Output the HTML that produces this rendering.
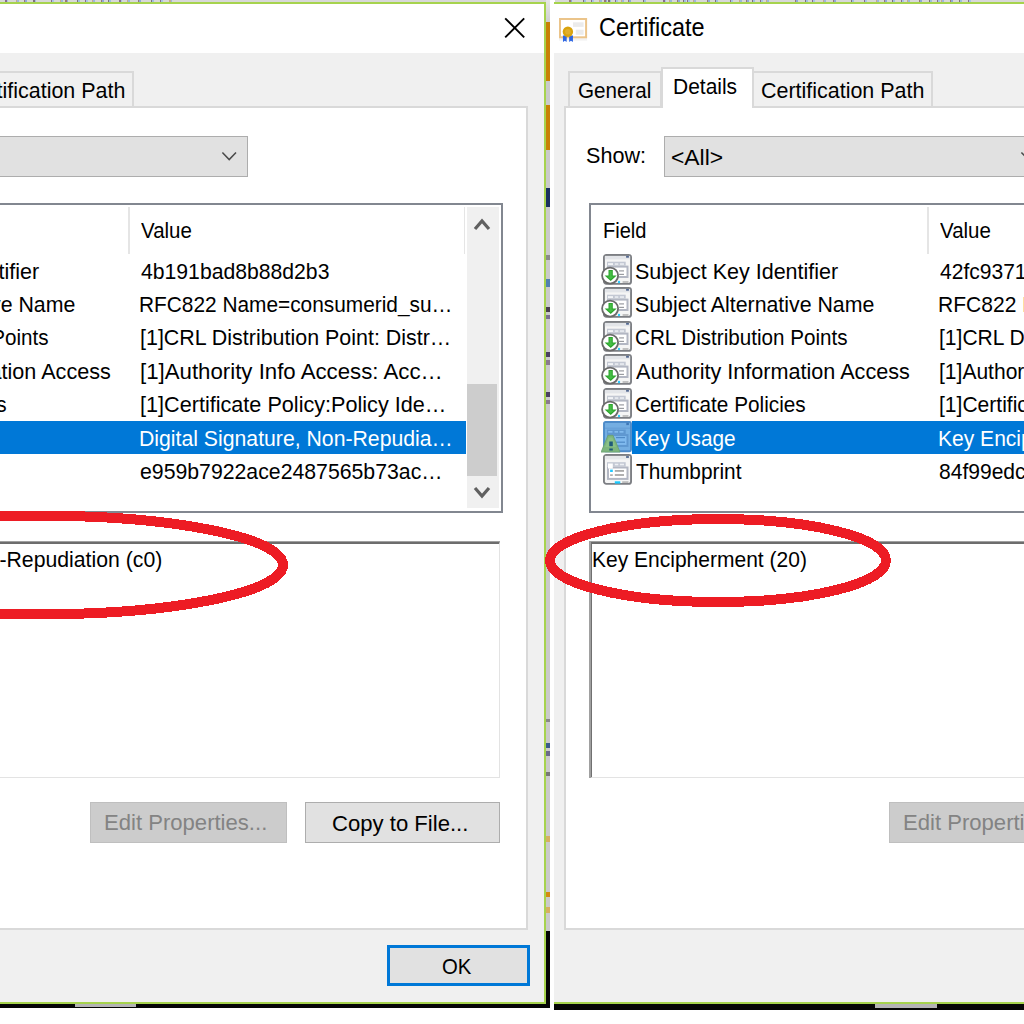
<!DOCTYPE html>
<html><head><meta charset="utf-8"><style>
html,body{margin:0;padding:0;}
body{width:1024px;height:1024px;overflow:hidden;position:relative;background:#fff;font-family:"Liberation Sans", sans-serif;}
</style></head><body>
<div style="position:absolute;left:0px;top:0px;width:546px;height:2.3px;background:#d8d8d8"></div><div style="position:absolute;left:555px;top:0px;width:469px;height:2.3px;background:#d8d8d8"></div><div style="position:absolute;left:546px;top:0px;width:4px;height:22px;background:linear-gradient(#e6e6e6,#cfcfcf)"></div><div style="position:absolute;left:546px;top:22px;width:4px;height:909px;background:#cacaca"></div><div style="position:absolute;left:546px;top:22px;width:4px;height:59px;background:#c98004"></div><div style="position:absolute;left:546px;top:105px;width:4px;height:45px;background:#c98004"></div><div style="position:absolute;left:546px;top:188px;width:4px;height:19px;background:#1a3060"></div><div style="position:absolute;left:546px;top:255px;width:4px;height:5px;background:#8a8a8a"></div><div style="position:absolute;left:546px;top:279px;width:4px;height:8px;background:#5080b0"></div><div style="position:absolute;left:546px;top:307px;width:4px;height:5px;background:#4a4050"></div><div style="position:absolute;left:546px;top:315px;width:4px;height:4px;background:#7a7090"></div><div style="position:absolute;left:546px;top:352px;width:4px;height:5px;background:#4a4060"></div><div style="position:absolute;left:546px;top:360px;width:4px;height:5px;background:#8a7a90"></div><div style="position:absolute;left:546px;top:392px;width:4px;height:5px;background:#4a4060"></div><div style="position:absolute;left:546px;top:400px;width:4px;height:4px;background:#8a7a90"></div><div style="position:absolute;left:546px;top:719px;width:4px;height:3px;background:#888"></div><div style="position:absolute;left:546px;top:743px;width:4px;height:5px;background:#3a5a8a"></div><div style="position:absolute;left:546px;top:751px;width:4px;height:5px;background:#6a6a8a"></div><div style="position:absolute;left:546px;top:772px;width:4px;height:4px;background:#777"></div><div style="position:absolute;left:546px;top:836px;width:4px;height:6px;background:#d6b060"></div><div style="position:absolute;left:546px;top:892px;width:4px;height:5px;background:#d48a10"></div><div style="position:absolute;left:546px;top:907px;width:4px;height:6px;background:#d6b060"></div><div style="position:absolute;left:-245px;top:2px;width:789px;height:2px;background:#a6d34d"></div><div style="position:absolute;left:544px;top:2px;width:2px;height:1002px;background:#a6d34d"></div><div style="position:absolute;left:-245px;top:1002px;width:791px;height:2px;background:#a6d34d"></div><div style="position:absolute;left:-245px;top:4px;width:789px;height:49px;background:#fff"></div><div style="position:absolute;left:-245px;top:53px;width:789px;height:949px;background:#f0f0f0"></div><div style="position:absolute;left:-245px;top:1004px;width:795px;height:3.6px;background:#050505"></div><div style="position:absolute;left:546px;top:931px;width:4px;height:73px;background:#050505"></div><svg width="22" height="22" style="position:absolute;left:504px;top:17px"><path d="M1.2 1.4 L20.2 20.4 M20.2 1.4 L1.2 20.4" stroke="#000" stroke-width="1.9"/></svg><div style="position:absolute;left:-231px;top:71.3px;width:94px;height:37px;background:#f0f0f0;border:2px solid #d9d9d9;border-bottom:none;box-sizing:border-box"></div><div style="position:absolute;left:-46.599999999999994px;top:71.3px;width:180.6px;height:37px;background:#f0f0f0;border:2px solid #d9d9d9;border-bottom:none;box-sizing:border-box"></div><div style="position:absolute;left:-235px;top:106px;width:763px;height:823.5px;background:#fff;border:2px solid #d9d9d9;box-sizing:border-box"></div><div style="position:absolute;left:-138.4px;top:67.4px;width:93.4px;height:41px;background:#fff;border:2px solid #d9d9d9;border-bottom:none;box-sizing:border-box"></div><div style="position:absolute;left:-221.42px;top:77.64px;font-size:22.5px;line-height:25.85px;color:#000;white-space:pre;transform:scaleX(0.9167);transform-origin:0 0;">General</div><div style="position:absolute;left:-125.66px;top:74.44px;font-size:22.5px;line-height:25.85px;color:#000;white-space:pre;transform:scaleX(0.9318);transform-origin:0 0;">Details</div><div style="position:absolute;left:-38.25px;top:77.64px;font-size:22.5px;line-height:25.85px;color:#000;white-space:pre;transform:scaleX(0.9538);transform-origin:0 0;">Certification Path</div><div style="position:absolute;left:-213.36px;top:143.04px;font-size:22.5px;line-height:25.85px;color:#000;white-space:pre;transform:scaleX(0.9600);transform-origin:0 0;">Show:</div><div style="position:absolute;left:-135px;top:136px;width:382.5px;height:40.6px;background:#e1e1e1;border:1.6px solid #adadad;box-sizing:border-box"></div><div style="position:absolute;left:-127.52px;top:144.94px;font-size:22.5px;line-height:25.85px;color:#000;white-space:pre;transform:scaleX(1.0160);transform-origin:0 0;">&lt;All&gt;</div><svg width="18" height="12" style="position:absolute;left:221px;top:150.5px"><path d="M1.4 1.4 L8.2 8.6 L15 1.4" fill="none" stroke="#4a4a4a" stroke-width="1.5"/></svg><div style="position:absolute;left:-210px;top:202.5px;width:712.5px;height:310px;background:#fff;border:2px solid #828790;box-sizing:border-box"></div><div style="position:absolute;left:128px;top:207px;width:1.6px;height:47px;background:#e5e5e5"></div><div style="position:absolute;left:463.5px;top:207px;width:1.6px;height:47px;background:#e5e5e5"></div><div style="position:absolute;left:-195.78px;top:218.04px;font-size:22.5px;line-height:25.85px;color:#000;white-space:pre;transform:scaleX(0.8913);transform-origin:0 0;">Field</div><div style="position:absolute;left:141.20px;top:218.04px;font-size:22.5px;line-height:25.85px;color:#000;white-space:pre;transform:scaleX(0.9109);transform-origin:0 0;">Value</div><svg width="34" height="34" viewBox="-2 -1 34 34" style="position:absolute;left:-198px;top:253.0px">
<rect x="0.95" y="0.95" width="27.1" height="28.9" rx="2.4" fill="#f5f5f5" stroke="#7d7f84" stroke-width="1.9"/>
<rect x="1.9" y="1.9" width="25.2" height="3.5" fill="#e3e5e9"/>
<rect x="23.1" y="1.9" width="2.8" height="1.8" fill="#51678f"/>
<rect x="4" y="7.7" width="18.7" height="3.9" fill="#c3c8d3"/>
<rect x="5" y="9.3" width="5" height="1.5" fill="#fff"/>
<rect x="11.8" y="9.3" width="3.5" height="1.5" fill="#eef0f4"/>
<rect x="16.9" y="9.3" width="4.1" height="1.5" fill="#eef0f4"/>
<rect x="5" y="12.6" width="19.5" height="10.4" fill="#fff" stroke="#b3b7c3" stroke-width="2"/>
<rect x="16.1" y="16.3" width="4.9" height="1.2" fill="#9a9ca1"/>
<rect x="16.1" y="19.8" width="4.9" height="1.2" fill="#9a9ca1"/>
<rect x="19.6" y="27.2" width="5.9" height="1.6" fill="#b5b5b5"/>
<circle cx="16" cy="28" r="1.2" fill="#2bcaff"/>
<circle cx="7.1" cy="21.6" r="8" fill="#fff" stroke="#6b6b6b" stroke-width="1.8"/>
<path d="M5.5 16 H9.8 V21.4 H13.75 L7.7 26.9 L1.6 21.4 H5.5 Z" fill="#2ea52e"/>
<path d="M6.6 17 H8.7 V22.4 H11 L7.7 25.2 L4.4 22.4 H6.6 Z" fill="#45be45"/>
</svg><div style="position:absolute;left:-163.96px;top:258.54px;font-size:22.5px;line-height:25.85px;color:#000;white-space:pre;transform:scaleX(0.9557);transform-origin:0 0;">Subject Key Identifier</div><div style="position:absolute;left:141.00px;top:258.54px;font-size:22.5px;line-height:25.85px;color:#000;white-space:pre;transform:scaleX(0.9410);transform-origin:0 0;">4b191bad8b88d2b3</div><svg width="34" height="34" viewBox="-2 -1 34 34" style="position:absolute;left:-198px;top:286.4px">
<rect x="0.95" y="0.95" width="27.1" height="28.9" rx="2.4" fill="#f5f5f5" stroke="#7d7f84" stroke-width="1.9"/>
<rect x="1.9" y="1.9" width="25.2" height="3.5" fill="#e3e5e9"/>
<rect x="23.1" y="1.9" width="2.8" height="1.8" fill="#51678f"/>
<rect x="4" y="7.7" width="18.7" height="3.9" fill="#c3c8d3"/>
<rect x="5" y="9.3" width="5" height="1.5" fill="#fff"/>
<rect x="11.8" y="9.3" width="3.5" height="1.5" fill="#eef0f4"/>
<rect x="16.9" y="9.3" width="4.1" height="1.5" fill="#eef0f4"/>
<rect x="5" y="12.6" width="19.5" height="10.4" fill="#fff" stroke="#b3b7c3" stroke-width="2"/>
<rect x="16.1" y="16.3" width="4.9" height="1.2" fill="#9a9ca1"/>
<rect x="16.1" y="19.8" width="4.9" height="1.2" fill="#9a9ca1"/>
<rect x="19.6" y="27.2" width="5.9" height="1.6" fill="#b5b5b5"/>
<circle cx="16" cy="28" r="1.2" fill="#2bcaff"/>
<circle cx="7.1" cy="21.6" r="8" fill="#fff" stroke="#6b6b6b" stroke-width="1.8"/>
<path d="M5.5 16 H9.8 V21.4 H13.75 L7.7 26.9 L1.6 21.4 H5.5 Z" fill="#2ea52e"/>
<path d="M6.6 17 H8.7 V22.4 H11 L7.7 25.2 L4.4 22.4 H6.6 Z" fill="#45be45"/>
</svg><div style="position:absolute;left:-163.95px;top:291.94px;font-size:22.5px;line-height:25.85px;color:#000;white-space:pre;transform:scaleX(0.9472);transform-origin:0 0;">Subject Alternative Name</div><div style="position:absolute;left:139.15px;top:291.94px;font-size:22.5px;line-height:25.85px;color:#000;white-space:pre;transform:scaleX(0.9263);transform-origin:0 0;">RFC822 Name=consumerid_su…</div><svg width="34" height="34" viewBox="-2 -1 34 34" style="position:absolute;left:-198px;top:319.8px">
<rect x="0.95" y="0.95" width="27.1" height="28.9" rx="2.4" fill="#f5f5f5" stroke="#7d7f84" stroke-width="1.9"/>
<rect x="1.9" y="1.9" width="25.2" height="3.5" fill="#e3e5e9"/>
<rect x="23.1" y="1.9" width="2.8" height="1.8" fill="#51678f"/>
<rect x="4" y="7.7" width="18.7" height="3.9" fill="#c3c8d3"/>
<rect x="5" y="9.3" width="5" height="1.5" fill="#fff"/>
<rect x="11.8" y="9.3" width="3.5" height="1.5" fill="#eef0f4"/>
<rect x="16.9" y="9.3" width="4.1" height="1.5" fill="#eef0f4"/>
<rect x="5" y="12.6" width="19.5" height="10.4" fill="#fff" stroke="#b3b7c3" stroke-width="2"/>
<rect x="16.1" y="16.3" width="4.9" height="1.2" fill="#9a9ca1"/>
<rect x="16.1" y="19.8" width="4.9" height="1.2" fill="#9a9ca1"/>
<rect x="19.6" y="27.2" width="5.9" height="1.6" fill="#b5b5b5"/>
<circle cx="16" cy="28" r="1.2" fill="#2bcaff"/>
<circle cx="7.1" cy="21.6" r="8" fill="#fff" stroke="#6b6b6b" stroke-width="1.8"/>
<path d="M5.5 16 H9.8 V21.4 H13.75 L7.7 26.9 L1.6 21.4 H5.5 Z" fill="#2ea52e"/>
<path d="M6.6 17 H8.7 V22.4 H11 L7.7 25.2 L4.4 22.4 H6.6 Z" fill="#45be45"/>
</svg><div style="position:absolute;left:-163.92px;top:325.34px;font-size:22.5px;line-height:25.85px;color:#000;white-space:pre;transform:scaleX(0.9170);transform-origin:0 0;">CRL Distribution Points</div><div style="position:absolute;left:140.05px;top:325.34px;font-size:22.5px;line-height:25.85px;color:#000;white-space:pre;transform:scaleX(0.9526);transform-origin:0 0;">[1]CRL Distribution Point: Distr…</div><svg width="34" height="34" viewBox="-2 -1 34 34" style="position:absolute;left:-198px;top:353.2px">
<rect x="0.95" y="0.95" width="27.1" height="28.9" rx="2.4" fill="#f5f5f5" stroke="#7d7f84" stroke-width="1.9"/>
<rect x="1.9" y="1.9" width="25.2" height="3.5" fill="#e3e5e9"/>
<rect x="23.1" y="1.9" width="2.8" height="1.8" fill="#51678f"/>
<rect x="4" y="7.7" width="18.7" height="3.9" fill="#c3c8d3"/>
<rect x="5" y="9.3" width="5" height="1.5" fill="#fff"/>
<rect x="11.8" y="9.3" width="3.5" height="1.5" fill="#eef0f4"/>
<rect x="16.9" y="9.3" width="4.1" height="1.5" fill="#eef0f4"/>
<rect x="5" y="12.6" width="19.5" height="10.4" fill="#fff" stroke="#b3b7c3" stroke-width="2"/>
<rect x="16.1" y="16.3" width="4.9" height="1.2" fill="#9a9ca1"/>
<rect x="16.1" y="19.8" width="4.9" height="1.2" fill="#9a9ca1"/>
<rect x="19.6" y="27.2" width="5.9" height="1.6" fill="#b5b5b5"/>
<circle cx="16" cy="28" r="1.2" fill="#2bcaff"/>
<circle cx="7.1" cy="21.6" r="8" fill="#fff" stroke="#6b6b6b" stroke-width="1.8"/>
<path d="M5.5 16 H9.8 V21.4 H13.75 L7.7 26.9 L1.6 21.4 H5.5 Z" fill="#2ea52e"/>
<path d="M6.6 17 H8.7 V22.4 H11 L7.7 25.2 L4.4 22.4 H6.6 Z" fill="#45be45"/>
</svg><div style="position:absolute;left:-163.00px;top:358.74px;font-size:22.5px;line-height:25.85px;color:#000;white-space:pre;transform:scaleX(0.9604);transform-origin:0 0;">Authority Information Access</div><div style="position:absolute;left:140.01px;top:358.74px;font-size:22.5px;line-height:25.85px;color:#000;white-space:pre;transform:scaleX(0.9881);transform-origin:0 0;">[1]Authority Info Access: Acc…</div><svg width="34" height="34" viewBox="-2 -1 34 34" style="position:absolute;left:-198px;top:386.6px">
<rect x="0.95" y="0.95" width="27.1" height="28.9" rx="2.4" fill="#f5f5f5" stroke="#7d7f84" stroke-width="1.9"/>
<rect x="1.9" y="1.9" width="25.2" height="3.5" fill="#e3e5e9"/>
<rect x="23.1" y="1.9" width="2.8" height="1.8" fill="#51678f"/>
<rect x="4" y="7.7" width="18.7" height="3.9" fill="#c3c8d3"/>
<rect x="5" y="9.3" width="5" height="1.5" fill="#fff"/>
<rect x="11.8" y="9.3" width="3.5" height="1.5" fill="#eef0f4"/>
<rect x="16.9" y="9.3" width="4.1" height="1.5" fill="#eef0f4"/>
<rect x="5" y="12.6" width="19.5" height="10.4" fill="#fff" stroke="#b3b7c3" stroke-width="2"/>
<rect x="16.1" y="16.3" width="4.9" height="1.2" fill="#9a9ca1"/>
<rect x="16.1" y="19.8" width="4.9" height="1.2" fill="#9a9ca1"/>
<rect x="19.6" y="27.2" width="5.9" height="1.6" fill="#b5b5b5"/>
<circle cx="16" cy="28" r="1.2" fill="#2bcaff"/>
<circle cx="7.1" cy="21.6" r="8" fill="#fff" stroke="#6b6b6b" stroke-width="1.8"/>
<path d="M5.5 16 H9.8 V21.4 H13.75 L7.7 26.9 L1.6 21.4 H5.5 Z" fill="#2ea52e"/>
<path d="M6.6 17 H8.7 V22.4 H11 L7.7 25.2 L4.4 22.4 H6.6 Z" fill="#45be45"/>
</svg><div style="position:absolute;left:-163.92px;top:392.14px;font-size:22.5px;line-height:25.85px;color:#000;white-space:pre;transform:scaleX(0.9223);transform-origin:0 0;">Certificate Policies</div><div style="position:absolute;left:140.04px;top:392.14px;font-size:22.5px;line-height:25.85px;color:#000;white-space:pre;transform:scaleX(0.9610);transform-origin:0 0;">[1]Certificate Policy:Policy Ide…</div><div style="position:absolute;left:-167px;top:420.5px;width:633px;height:33.1px;background:#0078d7"></div><svg width="34" height="34" viewBox="-2 0 34 34" style="position:absolute;left:-198px;top:420.5px">
<rect x="1" y="1" width="27" height="29.3" rx="1.5" fill="#74aee2" stroke="#4d8bc9" stroke-width="1.9"/>
<rect x="2" y="6.6" width="25" height="1.2" fill="#66a0d8"/>
<rect x="23.3" y="1.8" width="2.6" height="2.3" fill="#3f78b8"/>
<rect x="4" y="8.6" width="18.7" height="4.5" fill="#5e97d0"/>
<rect x="5.2" y="10" width="4.3" height="1.7" fill="#82bbee"/>
<rect x="11.5" y="10" width="3.5" height="1.7" fill="#82bbee"/>
<rect x="16.5" y="10" width="4" height="1.7" fill="#82bbee"/>
<rect x="5" y="14.1" width="19.5" height="10.8" fill="#80baee" stroke="#5e97d0" stroke-width="2"/>
<rect x="13" y="16" width="9" height="1.2" fill="#4f8ac6"/>
<rect x="13" y="20.6" width="9" height="1.2" fill="#4f8ac6"/>
<path d="M5 14.3 H10 L17 31.1 H-1.9 Z" fill="#7db57d" stroke="#6a9f70" stroke-width="0.8"/>
<path d="M5.8 16.5 H9.2 L13 26 H2 Z" fill="#8fc48a" opacity="0.7"/>
<rect x="6.3" y="20.5" width="3.5" height="4.7" fill="#1f5a7a"/>
<rect x="6.3" y="27.5" width="3.5" height="2" fill="#1f5a7a"/>
</svg><div style="position:absolute;left:-164.85px;top:425.54px;font-size:22.5px;line-height:25.85px;color:#fff;white-space:pre;transform:scaleX(0.9234);transform-origin:0 0;">Key Usage</div><div style="position:absolute;left:139.11px;top:425.54px;font-size:22.5px;line-height:25.85px;color:#fff;white-space:pre;transform:scaleX(0.9433);transform-origin:0 0;">Digital Signature, Non-Repudia…</div><svg width="34" height="34" viewBox="-2 -1 34 34" style="position:absolute;left:-198px;top:453.29999999999995px">
<rect x="0.95" y="0.95" width="27.1" height="28.9" rx="2.4" fill="#f5f5f5" stroke="#7d7f84" stroke-width="1.9"/>
<rect x="1.9" y="1.9" width="25.2" height="3.5" fill="#e6e8ea"/>
<rect x="23.1" y="2.1" width="2.8" height="1.8" fill="#51678f"/>
<rect x="4" y="8.2" width="18.7" height="4.3" fill="#c3c8d3"/>
<rect x="11.8" y="9.7" width="3.5" height="1.6" fill="#eef0f4"/>
<rect x="16.9" y="9.7" width="4.1" height="1.6" fill="#eef0f4"/>
<rect x="5" y="13.5" width="19.5" height="11.4" fill="#fff" stroke="#b3b7c3" stroke-width="2"/>
<rect x="5" y="9.5" width="4.8" height="5" fill="#fff"/>
<rect x="7.1" y="15.6" width="2.7" height="2.4" fill="#1ec8ff"/>
<rect x="7.1" y="20.3" width="2.7" height="1.6" fill="#a8a8a8"/>
<rect x="11.8" y="16" width="9.2" height="1.8" fill="#a9a9a9"/>
<rect x="11.8" y="20.1" width="9.2" height="1.8" fill="#a9a9a9"/>
<rect x="11.8" y="27.3" width="5.5" height="2.3" fill="#19c9ff"/>
<rect x="19.2" y="27.3" width="6.3" height="1.6" fill="#b5b5b5"/>
</svg><div style="position:absolute;left:-163.00px;top:458.94px;font-size:22.5px;line-height:25.85px;color:#000;white-space:pre;transform:scaleX(0.9272);transform-origin:0 0;">Thumbprint</div><div style="position:absolute;left:140.06px;top:458.94px;font-size:22.5px;line-height:25.85px;color:#000;white-space:pre;transform:scaleX(0.9445);transform-origin:0 0;">e959b7922ace2487565b73ac…</div><div style="position:absolute;left:467px;top:206.8px;width:31.6px;height:301.5px;background:#f0f0f0"></div><div style="position:absolute;left:467.29999999999995px;top:383.75px;width:29.3px;height:91.75px;background:#cdcdcd"></div><svg width="18" height="14" style="position:absolute;left:473px;top:217px"><path d="M2 12 L9 4 L16 12" fill="none" stroke="#606060" stroke-width="3.2"/></svg><svg width="18" height="14" style="position:absolute;left:473px;top:486px"><path d="M2 2 L9 10 L16 2" fill="none" stroke="#606060" stroke-width="3.2"/></svg><div style="position:absolute;left:-210px;top:540.8px;width:710px;height:237px;background:#fff;border-top:3.2px solid #6d6d6d;border-left:3.6px solid #707070;border-right:1.8px solid #e3e3e3;border-bottom:1.8px solid #e3e3e3;box-sizing:border-box"></div><div style="position:absolute;left:-210px;top:540.8px;width:710px;height:1.2px;background:#a0a0a0"></div><div style="position:absolute;left:-210px;top:540.8px;width:1.6px;height:237px;background:#a0a0a0"></div><div style="position:absolute;left:-206.89px;top:547.14px;font-size:22.5px;line-height:25.85px;color:#000;white-space:pre;transform:scaleX(0.9433);transform-origin:0 0;">Digital Signature, Non-Repudiation (c0)</div><div style="position:absolute;left:90px;top:802px;width:197px;height:40.6px;background:#cccccc;border:1.6px solid #bfbfbf;box-sizing:border-box"></div><div style="position:absolute;left:103.84px;top:810.44px;font-size:22.5px;line-height:25.85px;color:#838383;white-space:pre;transform:scaleX(0.9816);transform-origin:0 0;">Edit Properties...</div><div style="position:absolute;left:304.6px;top:802px;width:195.4px;height:40.5px;background:#e1e1e1;border:1.6px solid #adadad;box-sizing:border-box"></div><div style="position:absolute;left:331.72px;top:810.84px;font-size:22.5px;line-height:25.85px;color:#000;white-space:pre;transform:scaleX(0.9824);transform-origin:0 0;">Copy to File...</div><div style="position:absolute;left:386.6px;top:945.2px;width:143px;height:40.8px;background:#e1e1e1;border:3.3px solid #0078d7;box-sizing:border-box"></div><div style="position:absolute;left:442.10px;top:954.44px;font-size:22.5px;line-height:25.85px;color:#000;white-space:pre;transform:scaleX(0.9032);transform-origin:0 0;">OK</div><div style="position:absolute;left:554px;top:2px;width:789px;height:2px;background:#a6d34d"></div><div style="position:absolute;left:1343px;top:2px;width:2px;height:1002px;background:#a6d34d"></div><div style="position:absolute;left:554px;top:1002px;width:791px;height:2px;background:#a6d34d"></div><div style="position:absolute;left:554px;top:4px;width:789px;height:49px;background:#fff"></div><div style="position:absolute;left:554px;top:53px;width:789px;height:949px;background:#f0f0f0"></div><div style="position:absolute;left:554px;top:1004px;width:795px;height:5.6px;background:#050505"></div><div style="position:absolute;left:1345px;top:931px;width:4px;height:73px;background:#050505"></div><svg width="32" height="28" viewBox="0 0 32 28" style="position:absolute;left:559.1px;top:17.9px">
<rect x="0" y="20.3" width="28.1" height="2.3" fill="#ececec" opacity="0.7"/>
<rect x="1" y="1" width="26.1" height="18.3" fill="#fff" stroke="#ebc48a" stroke-width="2"/>
<rect x="14" y="4.3" width="10.6" height="4.6" fill="#ebebeb"/>
<rect x="16.8" y="11.7" width="7.8" height="5.1" fill="#ebebeb"/>
<path d="M3.9 17.5 H7.8 L7.6 24 L5.8 22.8 L4 24 Z" fill="#2d66e3"/>
<path d="M10.1 17.5 H14 L13.9 24 L12 22.8 L10.2 24 Z" fill="#2d66e3"/>
<circle cx="8.9" cy="13.8" r="5.2" fill="#d9a30d"/>
<circle cx="8.9" cy="13.8" r="2.8" fill="#e4b23a" opacity="0.7"/>
</svg><div style="position:absolute;left:599.08px;top:12.52px;font-size:25.5px;line-height:29.30px;color:#000;white-space:pre;transform:scaleX(0.9204);transform-origin:0 0;">Certificate</div><div style="position:absolute;left:568px;top:71.3px;width:94px;height:37px;background:#f0f0f0;border:2px solid #d9d9d9;border-bottom:none;box-sizing:border-box"></div><div style="position:absolute;left:752.4px;top:71.3px;width:180.6px;height:37px;background:#f0f0f0;border:2px solid #d9d9d9;border-bottom:none;box-sizing:border-box"></div><div style="position:absolute;left:564px;top:106px;width:763px;height:823.5px;background:#fff;border:2px solid #d9d9d9;box-sizing:border-box"></div><div style="position:absolute;left:660.6px;top:67.4px;width:93.4px;height:41px;background:#fff;border:2px solid #d9d9d9;border-bottom:none;box-sizing:border-box"></div><div style="position:absolute;left:577.58px;top:77.64px;font-size:22.5px;line-height:25.85px;color:#000;white-space:pre;transform:scaleX(0.9167);transform-origin:0 0;">General</div><div style="position:absolute;left:673.34px;top:74.44px;font-size:22.5px;line-height:25.85px;color:#000;white-space:pre;transform:scaleX(0.9318);transform-origin:0 0;">Details</div><div style="position:absolute;left:760.75px;top:77.64px;font-size:22.5px;line-height:25.85px;color:#000;white-space:pre;transform:scaleX(0.9538);transform-origin:0 0;">Certification Path</div><div style="position:absolute;left:585.64px;top:143.04px;font-size:22.5px;line-height:25.85px;color:#000;white-space:pre;transform:scaleX(0.9600);transform-origin:0 0;">Show:</div><div style="position:absolute;left:664px;top:136px;width:382.5px;height:40.6px;background:#e1e1e1;border:1.6px solid #adadad;box-sizing:border-box"></div><div style="position:absolute;left:671.48px;top:144.94px;font-size:22.5px;line-height:25.85px;color:#000;white-space:pre;transform:scaleX(1.0160);transform-origin:0 0;">&lt;All&gt;</div><svg width="18" height="12" style="position:absolute;left:1020px;top:150.5px"><path d="M1.4 1.4 L8.2 8.6 L15 1.4" fill="none" stroke="#4a4a4a" stroke-width="1.5"/></svg><div style="position:absolute;left:589px;top:202.5px;width:712.5px;height:310px;background:#fff;border:2px solid #828790;box-sizing:border-box"></div><div style="position:absolute;left:927px;top:207px;width:1.6px;height:47px;background:#e5e5e5"></div><div style="position:absolute;left:1262.5px;top:207px;width:1.6px;height:47px;background:#e5e5e5"></div><div style="position:absolute;left:603.22px;top:218.04px;font-size:22.5px;line-height:25.85px;color:#000;white-space:pre;transform:scaleX(0.8913);transform-origin:0 0;">Field</div><div style="position:absolute;left:940.20px;top:218.04px;font-size:22.5px;line-height:25.85px;color:#000;white-space:pre;transform:scaleX(0.9109);transform-origin:0 0;">Value</div><svg width="34" height="34" viewBox="-2 -1 34 34" style="position:absolute;left:601px;top:253.0px">
<rect x="0.95" y="0.95" width="27.1" height="28.9" rx="2.4" fill="#f5f5f5" stroke="#7d7f84" stroke-width="1.9"/>
<rect x="1.9" y="1.9" width="25.2" height="3.5" fill="#e3e5e9"/>
<rect x="23.1" y="1.9" width="2.8" height="1.8" fill="#51678f"/>
<rect x="4" y="7.7" width="18.7" height="3.9" fill="#c3c8d3"/>
<rect x="5" y="9.3" width="5" height="1.5" fill="#fff"/>
<rect x="11.8" y="9.3" width="3.5" height="1.5" fill="#eef0f4"/>
<rect x="16.9" y="9.3" width="4.1" height="1.5" fill="#eef0f4"/>
<rect x="5" y="12.6" width="19.5" height="10.4" fill="#fff" stroke="#b3b7c3" stroke-width="2"/>
<rect x="16.1" y="16.3" width="4.9" height="1.2" fill="#9a9ca1"/>
<rect x="16.1" y="19.8" width="4.9" height="1.2" fill="#9a9ca1"/>
<rect x="19.6" y="27.2" width="5.9" height="1.6" fill="#b5b5b5"/>
<circle cx="16" cy="28" r="1.2" fill="#2bcaff"/>
<circle cx="7.1" cy="21.6" r="8" fill="#fff" stroke="#6b6b6b" stroke-width="1.8"/>
<path d="M5.5 16 H9.8 V21.4 H13.75 L7.7 26.9 L1.6 21.4 H5.5 Z" fill="#2ea52e"/>
<path d="M6.6 17 H8.7 V22.4 H11 L7.7 25.2 L4.4 22.4 H6.6 Z" fill="#45be45"/>
</svg><div style="position:absolute;left:635.04px;top:258.54px;font-size:22.5px;line-height:25.85px;color:#000;white-space:pre;transform:scaleX(0.9557);transform-origin:0 0;">Subject Key Identifier</div><div style="position:absolute;left:940.00px;top:258.54px;font-size:22.5px;line-height:25.85px;color:#000;white-space:pre;transform:scaleX(0.9350);transform-origin:0 0;">42fc9371d8e3b9a6</div><svg width="34" height="34" viewBox="-2 -1 34 34" style="position:absolute;left:601px;top:286.4px">
<rect x="0.95" y="0.95" width="27.1" height="28.9" rx="2.4" fill="#f5f5f5" stroke="#7d7f84" stroke-width="1.9"/>
<rect x="1.9" y="1.9" width="25.2" height="3.5" fill="#e3e5e9"/>
<rect x="23.1" y="1.9" width="2.8" height="1.8" fill="#51678f"/>
<rect x="4" y="7.7" width="18.7" height="3.9" fill="#c3c8d3"/>
<rect x="5" y="9.3" width="5" height="1.5" fill="#fff"/>
<rect x="11.8" y="9.3" width="3.5" height="1.5" fill="#eef0f4"/>
<rect x="16.9" y="9.3" width="4.1" height="1.5" fill="#eef0f4"/>
<rect x="5" y="12.6" width="19.5" height="10.4" fill="#fff" stroke="#b3b7c3" stroke-width="2"/>
<rect x="16.1" y="16.3" width="4.9" height="1.2" fill="#9a9ca1"/>
<rect x="16.1" y="19.8" width="4.9" height="1.2" fill="#9a9ca1"/>
<rect x="19.6" y="27.2" width="5.9" height="1.6" fill="#b5b5b5"/>
<circle cx="16" cy="28" r="1.2" fill="#2bcaff"/>
<circle cx="7.1" cy="21.6" r="8" fill="#fff" stroke="#6b6b6b" stroke-width="1.8"/>
<path d="M5.5 16 H9.8 V21.4 H13.75 L7.7 26.9 L1.6 21.4 H5.5 Z" fill="#2ea52e"/>
<path d="M6.6 17 H8.7 V22.4 H11 L7.7 25.2 L4.4 22.4 H6.6 Z" fill="#45be45"/>
</svg><div style="position:absolute;left:635.05px;top:291.94px;font-size:22.5px;line-height:25.85px;color:#000;white-space:pre;transform:scaleX(0.9472);transform-origin:0 0;">Subject Alternative Name</div><div style="position:absolute;left:938.13px;top:291.94px;font-size:22.5px;line-height:25.85px;color:#000;white-space:pre;transform:scaleX(0.9350);transform-origin:0 0;">RFC822 Name=consumerid_su…</div><svg width="34" height="34" viewBox="-2 -1 34 34" style="position:absolute;left:601px;top:319.8px">
<rect x="0.95" y="0.95" width="27.1" height="28.9" rx="2.4" fill="#f5f5f5" stroke="#7d7f84" stroke-width="1.9"/>
<rect x="1.9" y="1.9" width="25.2" height="3.5" fill="#e3e5e9"/>
<rect x="23.1" y="1.9" width="2.8" height="1.8" fill="#51678f"/>
<rect x="4" y="7.7" width="18.7" height="3.9" fill="#c3c8d3"/>
<rect x="5" y="9.3" width="5" height="1.5" fill="#fff"/>
<rect x="11.8" y="9.3" width="3.5" height="1.5" fill="#eef0f4"/>
<rect x="16.9" y="9.3" width="4.1" height="1.5" fill="#eef0f4"/>
<rect x="5" y="12.6" width="19.5" height="10.4" fill="#fff" stroke="#b3b7c3" stroke-width="2"/>
<rect x="16.1" y="16.3" width="4.9" height="1.2" fill="#9a9ca1"/>
<rect x="16.1" y="19.8" width="4.9" height="1.2" fill="#9a9ca1"/>
<rect x="19.6" y="27.2" width="5.9" height="1.6" fill="#b5b5b5"/>
<circle cx="16" cy="28" r="1.2" fill="#2bcaff"/>
<circle cx="7.1" cy="21.6" r="8" fill="#fff" stroke="#6b6b6b" stroke-width="1.8"/>
<path d="M5.5 16 H9.8 V21.4 H13.75 L7.7 26.9 L1.6 21.4 H5.5 Z" fill="#2ea52e"/>
<path d="M6.6 17 H8.7 V22.4 H11 L7.7 25.2 L4.4 22.4 H6.6 Z" fill="#45be45"/>
</svg><div style="position:absolute;left:635.08px;top:325.34px;font-size:22.5px;line-height:25.85px;color:#000;white-space:pre;transform:scaleX(0.9170);transform-origin:0 0;">CRL Distribution Points</div><div style="position:absolute;left:939.07px;top:325.34px;font-size:22.5px;line-height:25.85px;color:#000;white-space:pre;transform:scaleX(0.9350);transform-origin:0 0;">[1]CRL Distribution Point: Distr…</div><svg width="34" height="34" viewBox="-2 -1 34 34" style="position:absolute;left:601px;top:353.2px">
<rect x="0.95" y="0.95" width="27.1" height="28.9" rx="2.4" fill="#f5f5f5" stroke="#7d7f84" stroke-width="1.9"/>
<rect x="1.9" y="1.9" width="25.2" height="3.5" fill="#e3e5e9"/>
<rect x="23.1" y="1.9" width="2.8" height="1.8" fill="#51678f"/>
<rect x="4" y="7.7" width="18.7" height="3.9" fill="#c3c8d3"/>
<rect x="5" y="9.3" width="5" height="1.5" fill="#fff"/>
<rect x="11.8" y="9.3" width="3.5" height="1.5" fill="#eef0f4"/>
<rect x="16.9" y="9.3" width="4.1" height="1.5" fill="#eef0f4"/>
<rect x="5" y="12.6" width="19.5" height="10.4" fill="#fff" stroke="#b3b7c3" stroke-width="2"/>
<rect x="16.1" y="16.3" width="4.9" height="1.2" fill="#9a9ca1"/>
<rect x="16.1" y="19.8" width="4.9" height="1.2" fill="#9a9ca1"/>
<rect x="19.6" y="27.2" width="5.9" height="1.6" fill="#b5b5b5"/>
<circle cx="16" cy="28" r="1.2" fill="#2bcaff"/>
<circle cx="7.1" cy="21.6" r="8" fill="#fff" stroke="#6b6b6b" stroke-width="1.8"/>
<path d="M5.5 16 H9.8 V21.4 H13.75 L7.7 26.9 L1.6 21.4 H5.5 Z" fill="#2ea52e"/>
<path d="M6.6 17 H8.7 V22.4 H11 L7.7 25.2 L4.4 22.4 H6.6 Z" fill="#45be45"/>
</svg><div style="position:absolute;left:636.00px;top:358.74px;font-size:22.5px;line-height:25.85px;color:#000;white-space:pre;transform:scaleX(0.9604);transform-origin:0 0;">Authority Information Access</div><div style="position:absolute;left:939.07px;top:358.74px;font-size:22.5px;line-height:25.85px;color:#000;white-space:pre;transform:scaleX(0.9350);transform-origin:0 0;">[1]Authority Info Access: Acc…</div><svg width="34" height="34" viewBox="-2 -1 34 34" style="position:absolute;left:601px;top:386.6px">
<rect x="0.95" y="0.95" width="27.1" height="28.9" rx="2.4" fill="#f5f5f5" stroke="#7d7f84" stroke-width="1.9"/>
<rect x="1.9" y="1.9" width="25.2" height="3.5" fill="#e3e5e9"/>
<rect x="23.1" y="1.9" width="2.8" height="1.8" fill="#51678f"/>
<rect x="4" y="7.7" width="18.7" height="3.9" fill="#c3c8d3"/>
<rect x="5" y="9.3" width="5" height="1.5" fill="#fff"/>
<rect x="11.8" y="9.3" width="3.5" height="1.5" fill="#eef0f4"/>
<rect x="16.9" y="9.3" width="4.1" height="1.5" fill="#eef0f4"/>
<rect x="5" y="12.6" width="19.5" height="10.4" fill="#fff" stroke="#b3b7c3" stroke-width="2"/>
<rect x="16.1" y="16.3" width="4.9" height="1.2" fill="#9a9ca1"/>
<rect x="16.1" y="19.8" width="4.9" height="1.2" fill="#9a9ca1"/>
<rect x="19.6" y="27.2" width="5.9" height="1.6" fill="#b5b5b5"/>
<circle cx="16" cy="28" r="1.2" fill="#2bcaff"/>
<circle cx="7.1" cy="21.6" r="8" fill="#fff" stroke="#6b6b6b" stroke-width="1.8"/>
<path d="M5.5 16 H9.8 V21.4 H13.75 L7.7 26.9 L1.6 21.4 H5.5 Z" fill="#2ea52e"/>
<path d="M6.6 17 H8.7 V22.4 H11 L7.7 25.2 L4.4 22.4 H6.6 Z" fill="#45be45"/>
</svg><div style="position:absolute;left:635.08px;top:392.14px;font-size:22.5px;line-height:25.85px;color:#000;white-space:pre;transform:scaleX(0.9223);transform-origin:0 0;">Certificate Policies</div><div style="position:absolute;left:939.07px;top:392.14px;font-size:22.5px;line-height:25.85px;color:#000;white-space:pre;transform:scaleX(0.9350);transform-origin:0 0;">[1]Certificate Policy:Policy Ide…</div><div style="position:absolute;left:632px;top:420.5px;width:633px;height:33.1px;background:#0078d7"></div><svg width="34" height="34" viewBox="-2 0 34 34" style="position:absolute;left:601px;top:420.5px">
<rect x="1" y="1" width="27" height="29.3" rx="1.5" fill="#74aee2" stroke="#4d8bc9" stroke-width="1.9"/>
<rect x="2" y="6.6" width="25" height="1.2" fill="#66a0d8"/>
<rect x="23.3" y="1.8" width="2.6" height="2.3" fill="#3f78b8"/>
<rect x="4" y="8.6" width="18.7" height="4.5" fill="#5e97d0"/>
<rect x="5.2" y="10" width="4.3" height="1.7" fill="#82bbee"/>
<rect x="11.5" y="10" width="3.5" height="1.7" fill="#82bbee"/>
<rect x="16.5" y="10" width="4" height="1.7" fill="#82bbee"/>
<rect x="5" y="14.1" width="19.5" height="10.8" fill="#80baee" stroke="#5e97d0" stroke-width="2"/>
<rect x="13" y="16" width="9" height="1.2" fill="#4f8ac6"/>
<rect x="13" y="20.6" width="9" height="1.2" fill="#4f8ac6"/>
<path d="M5 14.3 H10 L17 31.1 H-1.9 Z" fill="#7db57d" stroke="#6a9f70" stroke-width="0.8"/>
<path d="M5.8 16.5 H9.2 L13 26 H2 Z" fill="#8fc48a" opacity="0.7"/>
<rect x="6.3" y="20.5" width="3.5" height="4.7" fill="#1f5a7a"/>
<rect x="6.3" y="27.5" width="3.5" height="2" fill="#1f5a7a"/>
</svg><div style="position:absolute;left:634.15px;top:425.54px;font-size:22.5px;line-height:25.85px;color:#fff;white-space:pre;transform:scaleX(0.9234);transform-origin:0 0;">Key Usage</div><div style="position:absolute;left:938.13px;top:425.54px;font-size:22.5px;line-height:25.85px;color:#fff;white-space:pre;transform:scaleX(0.9350);transform-origin:0 0;">Key Encipherment (20)</div><svg width="34" height="34" viewBox="-2 -1 34 34" style="position:absolute;left:601px;top:453.29999999999995px">
<rect x="0.95" y="0.95" width="27.1" height="28.9" rx="2.4" fill="#f5f5f5" stroke="#7d7f84" stroke-width="1.9"/>
<rect x="1.9" y="1.9" width="25.2" height="3.5" fill="#e6e8ea"/>
<rect x="23.1" y="2.1" width="2.8" height="1.8" fill="#51678f"/>
<rect x="4" y="8.2" width="18.7" height="4.3" fill="#c3c8d3"/>
<rect x="11.8" y="9.7" width="3.5" height="1.6" fill="#eef0f4"/>
<rect x="16.9" y="9.7" width="4.1" height="1.6" fill="#eef0f4"/>
<rect x="5" y="13.5" width="19.5" height="11.4" fill="#fff" stroke="#b3b7c3" stroke-width="2"/>
<rect x="5" y="9.5" width="4.8" height="5" fill="#fff"/>
<rect x="7.1" y="15.6" width="2.7" height="2.4" fill="#1ec8ff"/>
<rect x="7.1" y="20.3" width="2.7" height="1.6" fill="#a8a8a8"/>
<rect x="11.8" y="16" width="9.2" height="1.8" fill="#a9a9a9"/>
<rect x="11.8" y="20.1" width="9.2" height="1.8" fill="#a9a9a9"/>
<rect x="11.8" y="27.3" width="5.5" height="2.3" fill="#19c9ff"/>
<rect x="19.2" y="27.3" width="6.3" height="1.6" fill="#b5b5b5"/>
</svg><div style="position:absolute;left:636.00px;top:458.94px;font-size:22.5px;line-height:25.85px;color:#000;white-space:pre;transform:scaleX(0.9272);transform-origin:0 0;">Thumbprint</div><div style="position:absolute;left:939.07px;top:458.94px;font-size:22.5px;line-height:25.85px;color:#000;white-space:pre;transform:scaleX(0.9350);transform-origin:0 0;">84f99edc2a7b6e0f3d15c4a7…</div><div style="position:absolute;left:1266px;top:206.8px;width:31.6px;height:301.5px;background:#f0f0f0"></div><div style="position:absolute;left:1266.3px;top:383.75px;width:29.3px;height:91.75px;background:#cdcdcd"></div><svg width="18" height="14" style="position:absolute;left:1272px;top:217px"><path d="M2 12 L9 4 L16 12" fill="none" stroke="#606060" stroke-width="3.2"/></svg><svg width="18" height="14" style="position:absolute;left:1272px;top:486px"><path d="M2 2 L9 10 L16 2" fill="none" stroke="#606060" stroke-width="3.2"/></svg><div style="position:absolute;left:589px;top:540.8px;width:710px;height:237px;background:#fff;border-top:3.2px solid #6d6d6d;border-left:3.6px solid #707070;border-right:1.8px solid #e3e3e3;border-bottom:1.8px solid #e3e3e3;box-sizing:border-box"></div><div style="position:absolute;left:589px;top:540.8px;width:710px;height:1.2px;background:#a0a0a0"></div><div style="position:absolute;left:589px;top:540.8px;width:1.6px;height:237px;background:#a0a0a0"></div><div style="position:absolute;left:592.13px;top:547.14px;font-size:22.5px;line-height:25.85px;color:#000;white-space:pre;transform:scaleX(0.9339);transform-origin:0 0;">Key Encipherment (20)</div><div style="position:absolute;left:889px;top:802px;width:197px;height:40.6px;background:#cccccc;border:1.6px solid #bfbfbf;box-sizing:border-box"></div><div style="position:absolute;left:902.84px;top:810.44px;font-size:22.5px;line-height:25.85px;color:#838383;white-space:pre;transform:scaleX(0.9816);transform-origin:0 0;">Edit Properties...</div><div style="position:absolute;left:1103.6px;top:802px;width:195.4px;height:40.5px;background:#e1e1e1;border:1.6px solid #adadad;box-sizing:border-box"></div><div style="position:absolute;left:1130.72px;top:810.84px;font-size:22.5px;line-height:25.85px;color:#000;white-space:pre;transform:scaleX(0.9824);transform-origin:0 0;">Copy to File...</div><div style="position:absolute;left:1185.6px;top:945.2px;width:143px;height:40.8px;background:#e1e1e1;border:3.3px solid #0078d7;box-sizing:border-box"></div><div style="position:absolute;left:1241.10px;top:954.44px;font-size:22.5px;line-height:25.85px;color:#000;white-space:pre;transform:scaleX(0.9032);transform-origin:0 0;">OK</div><div style="position:absolute;left:75px;top:1004.3px;width:60.5px;height:3px;background:#b4b4b4"></div><div style="position:absolute;left:874.5px;top:1004.3px;width:62px;height:3.4px;background:#b4b4b4"></div><div style="position:absolute;left:5.0px;top:0px;width:1.6px;height:2.3px;background:#8a6c8c"></div><div style="position:absolute;left:6.6px;top:0px;width:1.6px;height:2.3px;background:#a9c6e6"></div><div style="position:absolute;left:15.5px;top:0px;width:1.6px;height:2.3px;background:#c9a890"></div><div style="position:absolute;left:17.1px;top:0px;width:1.6px;height:2.3px;background:#9cb8dc"></div><div style="position:absolute;left:23.5px;top:0px;width:1.6px;height:2.3px;background:#9a7878"></div><div style="position:absolute;left:25.1px;top:0px;width:1.6px;height:2.3px;background:#90aad8"></div><div style="position:absolute;left:33.0px;top:0px;width:1.6px;height:2.3px;background:#80707a"></div><div style="position:absolute;left:34.6px;top:0px;width:1.6px;height:2.3px;background:#a0c0e0"></div><div style="position:absolute;left:50.5px;top:0px;width:1.6px;height:2.3px;background:#8a6c8c"></div><div style="position:absolute;left:52.1px;top:0px;width:1.6px;height:2.3px;background:#a9c6e6"></div><div style="position:absolute;left:59.5px;top:0px;width:1.6px;height:2.3px;background:#c9a890"></div><div style="position:absolute;left:61.1px;top:0px;width:1.6px;height:2.3px;background:#9cb8dc"></div><div style="position:absolute;left:65.0px;top:0px;width:1.6px;height:2.3px;background:#9a7878"></div><div style="position:absolute;left:66.6px;top:0px;width:1.6px;height:2.3px;background:#90aad8"></div><div style="position:absolute;left:76.5px;top:0px;width:1.6px;height:2.3px;background:#80707a"></div><div style="position:absolute;left:78.1px;top:0px;width:1.6px;height:2.3px;background:#a0c0e0"></div><div style="position:absolute;left:84.5px;top:0px;width:1.6px;height:2.3px;background:#8a6c8c"></div><div style="position:absolute;left:86.1px;top:0px;width:1.6px;height:2.3px;background:#a9c6e6"></div><div style="position:absolute;left:91.5px;top:0px;width:1.6px;height:2.3px;background:#c9a890"></div><div style="position:absolute;left:93.1px;top:0px;width:1.6px;height:2.3px;background:#9cb8dc"></div><div style="position:absolute;left:100.5px;top:0px;width:1.6px;height:2.3px;background:#9a7878"></div><div style="position:absolute;left:102.1px;top:0px;width:1.6px;height:2.3px;background:#90aad8"></div><div style="position:absolute;left:107.5px;top:0px;width:1.6px;height:2.3px;background:#80707a"></div><div style="position:absolute;left:109.1px;top:0px;width:1.6px;height:2.3px;background:#a0c0e0"></div><div style="position:absolute;left:119.0px;top:0px;width:1.6px;height:2.3px;background:#8a6c8c"></div><div style="position:absolute;left:120.6px;top:0px;width:1.6px;height:2.3px;background:#a9c6e6"></div><div style="position:absolute;left:126.5px;top:0px;width:1.6px;height:2.3px;background:#c9a890"></div><div style="position:absolute;left:128.1px;top:0px;width:1.6px;height:2.3px;background:#9cb8dc"></div><div style="position:absolute;left:137.5px;top:0px;width:1.6px;height:2.3px;background:#9a7878"></div><div style="position:absolute;left:139.1px;top:0px;width:1.6px;height:2.3px;background:#90aad8"></div><div style="position:absolute;left:150.5px;top:0px;width:1.6px;height:2.3px;background:#80707a"></div><div style="position:absolute;left:152.1px;top:0px;width:1.6px;height:2.3px;background:#a0c0e0"></div><div style="position:absolute;left:159.5px;top:0px;width:1.6px;height:2.3px;background:#8a6c8c"></div><div style="position:absolute;left:161.1px;top:0px;width:1.6px;height:2.3px;background:#a9c6e6"></div><div style="position:absolute;left:169.0px;top:0px;width:1.6px;height:2.3px;background:#c9a890"></div><div style="position:absolute;left:170.6px;top:0px;width:1.6px;height:2.3px;background:#9cb8dc"></div><div style="position:absolute;left:569.0px;top:0px;width:1.6px;height:2.3px;background:#9a7878"></div><div style="position:absolute;left:570.6px;top:0px;width:1.6px;height:2.3px;background:#90aad8"></div><div style="position:absolute;left:582.5px;top:0px;width:1.6px;height:2.3px;background:#80707a"></div><div style="position:absolute;left:584.1px;top:0px;width:1.6px;height:2.3px;background:#a0c0e0"></div><div style="position:absolute;left:590.5px;top:0px;width:1.6px;height:2.3px;background:#8a6c8c"></div><div style="position:absolute;left:592.1px;top:0px;width:1.6px;height:2.3px;background:#a9c6e6"></div><div style="position:absolute;left:598.5px;top:0px;width:1.6px;height:2.3px;background:#c9a890"></div><div style="position:absolute;left:600.1px;top:0px;width:1.6px;height:2.3px;background:#9cb8dc"></div><div style="position:absolute;left:604.0px;top:0px;width:1.6px;height:2.3px;background:#9a7878"></div><div style="position:absolute;left:605.6px;top:0px;width:1.6px;height:2.3px;background:#90aad8"></div><div style="position:absolute;left:608.0px;top:0px;width:1.6px;height:2.3px;background:#80707a"></div><div style="position:absolute;left:609.6px;top:0px;width:1.6px;height:2.3px;background:#a0c0e0"></div><div style="position:absolute;left:614.5px;top:0px;width:1.6px;height:2.3px;background:#8a6c8c"></div><div style="position:absolute;left:616.1px;top:0px;width:1.6px;height:2.3px;background:#a9c6e6"></div><div style="position:absolute;left:620.5px;top:0px;width:1.6px;height:2.3px;background:#c9a890"></div><div style="position:absolute;left:622.1px;top:0px;width:1.6px;height:2.3px;background:#9cb8dc"></div><div style="position:absolute;left:627.5px;top:0px;width:1.6px;height:2.3px;background:#9a7878"></div><div style="position:absolute;left:629.1px;top:0px;width:1.6px;height:2.3px;background:#90aad8"></div><div style="position:absolute;left:642.5px;top:0px;width:1.6px;height:2.3px;background:#80707a"></div><div style="position:absolute;left:644.1px;top:0px;width:1.6px;height:2.3px;background:#a0c0e0"></div><div style="position:absolute;left:663.0px;top:0px;width:1.6px;height:2.3px;background:#8a6c8c"></div><div style="position:absolute;left:664.6px;top:0px;width:1.6px;height:2.3px;background:#a9c6e6"></div><div style="position:absolute;left:668.5px;top:0px;width:1.6px;height:2.3px;background:#c9a890"></div><div style="position:absolute;left:670.1px;top:0px;width:1.6px;height:2.3px;background:#9cb8dc"></div><div style="position:absolute;left:676.5px;top:0px;width:1.6px;height:2.3px;background:#9a7878"></div><div style="position:absolute;left:678.1px;top:0px;width:1.6px;height:2.3px;background:#90aad8"></div><div style="position:absolute;left:682.5px;top:0px;width:1.6px;height:2.3px;background:#80707a"></div><div style="position:absolute;left:684.1px;top:0px;width:1.6px;height:2.3px;background:#a0c0e0"></div><div style="position:absolute;left:686.5px;top:0px;width:1.6px;height:2.3px;background:#8a6c8c"></div><div style="position:absolute;left:688.1px;top:0px;width:1.6px;height:2.3px;background:#a9c6e6"></div><div style="position:absolute;left:692.5px;top:0px;width:1.6px;height:2.3px;background:#c9a890"></div><div style="position:absolute;left:694.1px;top:0px;width:1.6px;height:2.3px;background:#9cb8dc"></div><div style="position:absolute;left:706.5px;top:0px;width:1.6px;height:2.3px;background:#9a7878"></div><div style="position:absolute;left:708.1px;top:0px;width:1.6px;height:2.3px;background:#90aad8"></div><div style="position:absolute;left:714.5px;top:0px;width:1.6px;height:2.3px;background:#80707a"></div><div style="position:absolute;left:716.1px;top:0px;width:1.6px;height:2.3px;background:#a0c0e0"></div><div style="position:absolute;left:729.5px;top:0px;width:1.6px;height:2.3px;background:#8a6c8c"></div><div style="position:absolute;left:731.1px;top:0px;width:1.6px;height:2.3px;background:#a9c6e6"></div><div style="position:absolute;left:738.5px;top:0px;width:1.6px;height:2.3px;background:#c9a890"></div><div style="position:absolute;left:740.1px;top:0px;width:1.6px;height:2.3px;background:#9cb8dc"></div><div style="position:absolute;left:745.5px;top:0px;width:1.6px;height:2.3px;background:#9a7878"></div><div style="position:absolute;left:747.1px;top:0px;width:1.6px;height:2.3px;background:#90aad8"></div><div style="position:absolute;left:751.5px;top:0px;width:1.6px;height:2.3px;background:#80707a"></div><div style="position:absolute;left:753.1px;top:0px;width:1.6px;height:2.3px;background:#a0c0e0"></div><div style="position:absolute;left:759.5px;top:0px;width:1.6px;height:2.3px;background:#8a6c8c"></div><div style="position:absolute;left:761.1px;top:0px;width:1.6px;height:2.3px;background:#a9c6e6"></div><div style="position:absolute;left:765.5px;top:0px;width:1.6px;height:2.3px;background:#c9a890"></div><div style="position:absolute;left:767.1px;top:0px;width:1.6px;height:2.3px;background:#9cb8dc"></div><div style="position:absolute;left:794.5px;top:0px;width:1.6px;height:2.3px;background:#9a7878"></div><div style="position:absolute;left:796.1px;top:0px;width:1.6px;height:2.3px;background:#90aad8"></div><div style="position:absolute;left:804.5px;top:0px;width:1.6px;height:2.3px;background:#80707a"></div><div style="position:absolute;left:806.1px;top:0px;width:1.6px;height:2.3px;background:#a0c0e0"></div><div style="position:absolute;left:811.5px;top:0px;width:1.6px;height:2.3px;background:#8a6c8c"></div><div style="position:absolute;left:813.1px;top:0px;width:1.6px;height:2.3px;background:#a9c6e6"></div><div style="position:absolute;left:822.5px;top:0px;width:1.6px;height:2.3px;background:#c9a890"></div><div style="position:absolute;left:824.1px;top:0px;width:1.6px;height:2.3px;background:#9cb8dc"></div><div style="position:absolute;left:832.5px;top:0px;width:1.6px;height:2.3px;background:#9a7878"></div><div style="position:absolute;left:834.1px;top:0px;width:1.6px;height:2.3px;background:#90aad8"></div><div style="position:absolute;left:850.5px;top:0px;width:1.6px;height:2.3px;background:#80707a"></div><div style="position:absolute;left:852.1px;top:0px;width:1.6px;height:2.3px;background:#a0c0e0"></div><div style="position:absolute;left:863.5px;top:0px;width:1.6px;height:2.3px;background:#8a6c8c"></div><div style="position:absolute;left:865.1px;top:0px;width:1.6px;height:2.3px;background:#a9c6e6"></div><div style="position:absolute;left:875.5px;top:0px;width:1.6px;height:2.3px;background:#c9a890"></div><div style="position:absolute;left:877.1px;top:0px;width:1.6px;height:2.3px;background:#9cb8dc"></div><div style="position:absolute;left:883.5px;top:0px;width:1.6px;height:2.3px;background:#9a7878"></div><div style="position:absolute;left:885.1px;top:0px;width:1.6px;height:2.3px;background:#90aad8"></div><div style="position:absolute;left:891.5px;top:0px;width:1.6px;height:2.3px;background:#80707a"></div><div style="position:absolute;left:893.1px;top:0px;width:1.6px;height:2.3px;background:#a0c0e0"></div><div style="position:absolute;left:900.5px;top:0px;width:1.6px;height:2.3px;background:#8a6c8c"></div><div style="position:absolute;left:902.1px;top:0px;width:1.6px;height:2.3px;background:#a9c6e6"></div><div style="position:absolute;left:906.5px;top:0px;width:1.6px;height:2.3px;background:#c9a890"></div><div style="position:absolute;left:908.1px;top:0px;width:1.6px;height:2.3px;background:#9cb8dc"></div><div style="position:absolute;left:918.5px;top:0px;width:1.6px;height:2.3px;background:#9a7878"></div><div style="position:absolute;left:920.1px;top:0px;width:1.6px;height:2.3px;background:#90aad8"></div><div style="position:absolute;left:928.5px;top:0px;width:1.6px;height:2.3px;background:#80707a"></div><div style="position:absolute;left:930.1px;top:0px;width:1.6px;height:2.3px;background:#a0c0e0"></div><div style="position:absolute;left:936.5px;top:0px;width:1.6px;height:2.3px;background:#8a6c8c"></div><div style="position:absolute;left:938.1px;top:0px;width:1.6px;height:2.3px;background:#a9c6e6"></div><div style="position:absolute;left:940.5px;top:0px;width:1.6px;height:2.3px;background:#c9a890"></div><div style="position:absolute;left:942.1px;top:0px;width:1.6px;height:2.3px;background:#9cb8dc"></div><div style="position:absolute;left:949.5px;top:0px;width:1.6px;height:2.3px;background:#9a7878"></div><div style="position:absolute;left:951.1px;top:0px;width:1.6px;height:2.3px;background:#90aad8"></div><div style="position:absolute;left:958.5px;top:0px;width:1.6px;height:2.3px;background:#80707a"></div><div style="position:absolute;left:960.1px;top:0px;width:1.6px;height:2.3px;background:#a0c0e0"></div><div style="position:absolute;left:967.5px;top:0px;width:1.6px;height:2.3px;background:#8a6c8c"></div><div style="position:absolute;left:969.1px;top:0px;width:1.6px;height:2.3px;background:#a9c6e6"></div><svg width="1024" height="1024" style="position:absolute;left:0;top:0" shape-rendering="crispEdges"><ellipse cx="40" cy="565" rx="243" ry="49.3" fill="none" stroke="#ed1c24" stroke-width="10"/><ellipse cx="718" cy="560.5" rx="168" ry="41.5" fill="none" stroke="#ed1c24" stroke-width="10"/></svg>
</body></html>
